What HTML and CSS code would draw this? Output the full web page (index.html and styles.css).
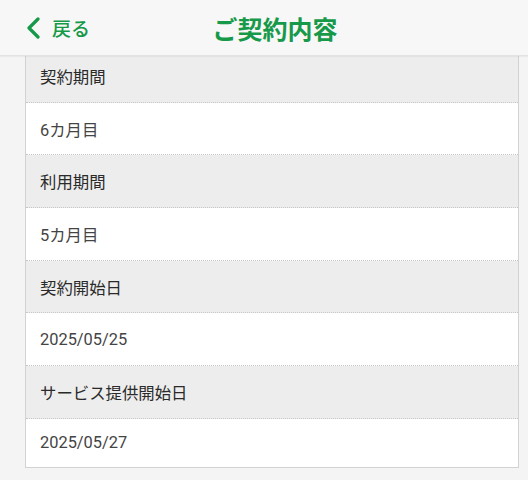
FILE: index.html
```html
<!DOCTYPE html>
<html lang="ja">
<head>
<meta charset="utf-8">
<link rel="stylesheet" href="styles.css">
</head>
<body>
<header class="topbar">
  <div class="back">
    <svg class="chev" width="16" height="22" viewBox="0 0 16 22"><path d="M13 2 L4 11 L13 20" fill="none" stroke="#17994a" stroke-width="3.2" stroke-linecap="round" stroke-linejoin="round"/></svg>
    <span class="back-text">戻る</span>
  </div>
  <h1 class="title">ご契約内容</h1>
</header>
<main class="content">
  <section class="card">
    <div class="row label">契約期間</div>
    <div class="row value">6カ月目</div>
    <div class="row label">利用期間</div>
    <div class="row value">5カ月目</div>
    <div class="row label">契約開始日</div>
    <div class="row value">2025/05/25</div>
    <div class="row label">サービス提供開始日</div>
    <div class="row value last">2025/05/27</div>
  </section>
</main>
</body>
</html>
```

FILE: styles.css
```css
html, body {
  margin: 0;
  padding: 0;
  background: #f4f4f4;
  font-family: Roboto, "Noto Sans CJK JP", sans-serif;
  overflow: hidden;
}
.topbar {
  position: relative;
  z-index: 2;
  height: 56px;
  box-sizing: border-box;
  background: #f7f7f7;
  border-bottom: 1px solid #e3e3e3;
  box-shadow: 0 1px 1px rgba(0,0,0,0.04);
  display: flex;
  align-items: center;
  justify-content: center;
}
.back {
  position: absolute;
  left: 25px;
  top: 0;
  height: 55px;
  display: flex;
  align-items: center;
  gap: 11px;
}
.chev { display: block; }
.back-text {
  color: #17994a;
  font-size: 19px;
  font-weight: 500;
  font-family: "Noto Sans CJK JP", sans-serif;
}
.title {
  margin: 0 0 0 22px;
  color: #17994a;
  font-size: 25px;
  font-weight: 700;
  font-family: "Noto Sans CJK JP", sans-serif;
}
.content {
  padding: 0 9px 0 25px;
}
.card {
  margin-top: -6px;
  background: #fff;
  border: 1px solid #d2d2d2;
  border-top: none;
}
.row {
  height: 52.7px;
  box-sizing: border-box;
  display: flex;
  align-items: center;
  padding-left: 14px;
  font-size: 16.4px;
  border-bottom: 1px dotted #c6c6c6;
  font-family: Roboto, "Noto Sans CJK JP", sans-serif;
}
.label {
  background: #ededed;
  color: #2a2a2a;
  font-weight: 400;
}
.value {
  background: #fff;
  color: #444;
}
.value.last {
  border-bottom: none;
  height: 48px;
}
```
